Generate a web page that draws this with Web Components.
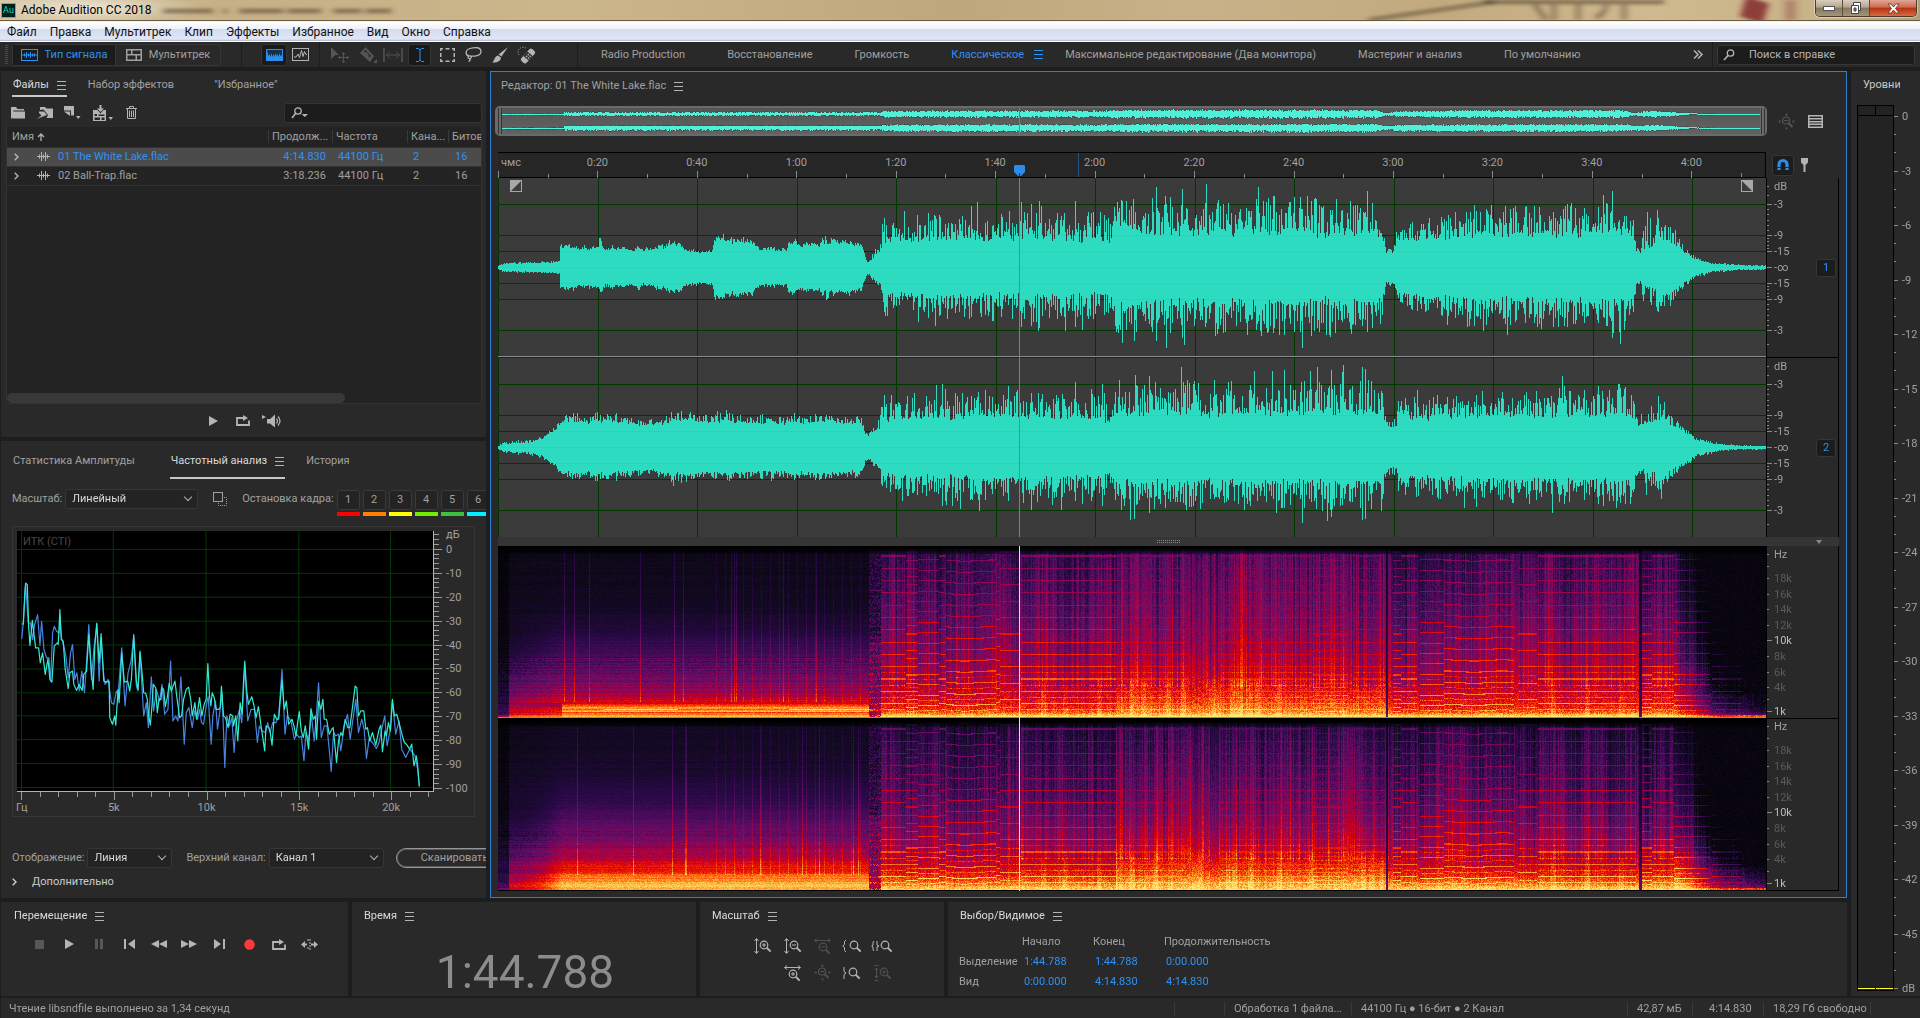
<!DOCTYPE html>
<html lang="ru">
<head>
<meta charset="utf-8">
<title>Adobe Audition CC 2018</title>
<style>
html,body{margin:0;height:100%;background:#1d1d1d;overflow:hidden}
body{font:11px/16px Roboto,"Noto Sans",sans-serif;color:#a0a0a0}
</style>
</head>
<body>
<audition-app></audition-app>
<script>
const BASE = `*{box-sizing:border-box}
:host{display:block;box-sizing:border-box}
button,input,select{font:inherit;color:inherit;margin:0;padding:0;border:0;background:none;outline:0;min-width:0}
button{display:flex;align-items:center;justify-content:center}
a{color:inherit;text-decoration:none}`;

function define(name, css, html, extra = {}) {
  const tpl = document.createElement('template');
  tpl.innerHTML = `<style>${BASE}${css}</style>${html}`;
  class El extends HTMLElement {
    constructor() {
      super();
      this.attachShadow({ mode: 'open' }).append(tpl.content.cloneNode(true));
    }
    connectedCallback() { if (extra.connected) extra.connected.call(this, this.shadowRoot); }
  }
  customElements.define(name, El);
}

/* ---------- icons: [width, height, markup] ---------- */
const mag = (x, y, r) => `<circle cx="${x}" cy="${y}" r="${r}" fill="none" stroke="currentColor" stroke-width="1.2"/><path d="M${x + r * .7} ${y + r * .7}l4 4" stroke="currentColor" stroke-width="2"/>`;
const S = 'fill="none" stroke="currentColor"';
const ICONS = {
  menu: [9, 9, `<path d="M0 .5h9M0 4.5h9M0 8.5h9" ${S}/>`],
  wave: [17, 12, `<rect x=".5" y=".5" width="16" height="11" ${S}/><path d="M1 6h15M3.500 4.500v3M5.500 3v6M7.500 4.500v3M9.500 3v6M11.500 4.500v3M13.500 4.500v3" ${S}/>`],
  multi: [16, 12, `<path d="M0 0h16v12H0zM1.500 1.500v3.500h3.500V1.500zM6.500 1.500v3.500h8V1.500zM1.500 6.500v4h8v-4zM11 6.500v4h3.500v-4z" fill="currentColor" fill-rule="evenodd"/>`],
  spectral: [17, 12, `<rect x=".5" y=".5" width="16" height="11" fill="#2c8ded" stroke="#2c8ded"/><path d="M1 1h15v5l-1.500 1-1-3-1 4-1-3-1 2-1-3-1 4-1-3-1 3-1-4-1 4-1-3-1 2z" fill="#12304f"/>`],
  pitch: [17, 13, `<rect x=".5" y=".5" width="16" height="12" ${S}/><path d="M2 9h2l2-3 1.500 3.500 2-7 1.500 6 1.500-5L14 6.500h1" ${S}/>`],
  move: [18, 16, `<path d="M0 0l8 8H4.500L0 12z" fill="currentColor"/><path d="M12.500 5.500v10M7.500 10.500h10M11 7l1.500-1.500L14 7M11 14l1.500 1.500L14 14M9 9l-1.500 1.500L9 12M16 9l1.500 1.500L16 12" ${S}/>`],
  razor: [17, 16, `<path d="M5.500 0L14 9l-4 6L0 6zM3.800 4.200l5.800 6.300 1.200-1.800-5.600-6.200z" fill="currentColor" fill-rule="evenodd"/><path d="M5.500 5l3 3.500" ${S} stroke-width="1.500"/><path d="M17 12v4h-4z" fill="currentColor"/>`],
  slip: [20, 14, `<path d="M1 0v14M19 0v14" ${S} stroke-width="1.500"/><path d="M3.500 7h13M7 3.500L3.500 7 7 10.500M13 3.500L16.500 7 13 10.500" ${S}/>`],
  ibeam: [8, 14, `<path d="M0 .5h2.500L4 2l1.500-1.500H8M4 2v10M0 13.500h2.500L4 12l1.500 1.500H8" ${S}/>`],
  marquee: [15, 14, `<path d="M.75 3V.75H3M5.500.75h4M12 .75h2.250V3M14.250 5v4M14.250 11v2.250H12M9.500 13.250h-4M3 13.250H.75V11M.75 9V5" ${S} stroke-width="1.500"/>`],
  lasso: [17, 15, `<path d="M4 9C0 8 0 3 5 1.500S16 0 16 4.500 9 9.500 5.500 9C3 8.500 2.500 11 4 11.500S7.500 10 5.500 9M5 11c.5 2 0 3-1.500 3.500" ${S} stroke-width="1.300"/>`],
  brush: [16, 16, `<path d="M16 0L9.500 9.500 6.500 7.500zM6 8.500l3 2c0 4-5 5.500-9 5 3-2 2-6 6-7z" fill="currentColor"/>`],
  heal: [18, 16, `<path d="M1 8a5 5 0 0 1 7.500-6.500" ${S} stroke-dasharray="1 1.500"/><g transform="rotate(-48 10 9)"><rect x="2" y="5.500" width="16" height="7" rx="2" fill="currentColor"/><rect x="7" y="5.500" width="6" height="7" fill="#292929"/><path d="M8 7.500h1.500v1.500H8zM10.500 7.500H12v1.500h-1.500zM8 10h1.500v1.500H8zM10.500 10H12v1.500h-1.500z" fill="currentColor"/></g>`],
  more: [10, 9, `<path d="M1 .5l4 4-4 4M5 .5l4 4-4 4" ${S} stroke-width="1.500"/>`],
  search: [12, 12, `<circle cx="7.500" cy="4" r="3.200" ${S} stroke-width="1.300"/><path d="M5 6.500L1 11" ${S} stroke-width="1.600"/>`],
  searchdd: [17, 12, `<circle cx="7" cy="4" r="3.200" ${S} stroke-width="1.300"/><path d="M4.500 6.500L1 11" ${S} stroke-width="1.600"/><path d="M10.500 7H17l-3.200 3z" fill="currentColor"/>`],
  folder: [14, 12, `<path d="M0 11.500V0h5l1.500 2H13v1.500H2.500L1 11.500zM2 4.500h12v7H1.200z" fill="currentColor"/>`],
  import: [16, 12, `<path d="M3 0h5l1.500 1.500H16V11H9.500L11 8 6.500 2.500 3 3z" fill="currentColor"/><path d="M0 12l4.500-3.500L2 6V4.500h5L10 8l-4 1.500z" fill="currentColor"/>`],
  newfile: [16, 13, `<path d="M0 0h10v9.500H7V4.500H0zM0 5.500h6v4.500zM12 10h4.500l-2.200 3z" fill="currentColor"/>`],
  insert: [20, 16, `<path d="M0 5h4.500L7.500 8.500 10.500 5H13v11H0zM1.500 9v2h2.500V9zM5.500 9.500v1.500h6V9.500zM1.500 12.500V15H7v-2.500zM8.500 12.500V15h3v-2.500z" fill="currentColor" fill-rule="evenodd"/><path d="M6.500 0h2v3.500H11L7.500 7 4 3.500h2.500zM15.500 12H20l-2.200 3z" fill="currentColor"/>`],
  trash: [11, 13, `<path d="M0 2.500h11M3.500 2V.5h4V2M1.500 3v9.500h8V3M3.500 4.500v6.500M5.500 4.500v6.500M7.500 4.500v6.500" ${S}/>`],
  clip: [13, 9, `<path d="M0 4.500h13M2.500 2.500v4M4.500 0v9M6.500 2.500v4M8.500 0v9M10.500 2.500v4" ${S}/>`],
  chev: [5, 8, `<path d="M.7.7L4 4 .7 7.300" ${S} stroke-width="1.400"/>`],
  up: [8, 8, `<path d="M4 8V1M1 4l3-3 3 3" ${S} stroke-width="1.300"/>`],
  play: [9, 10, `<path d="M0 0l9 5-9 5z" fill="currentColor"/>`],
  loop: [14, 11, `<path d="M4 3H1v7h12V5.500" ${S} stroke-width="1.800"/><path d="M4 2h3V0l5 3-5 3V4H4z" fill="currentColor"/>`],
  speaker: [20, 14, `<path d="M0 1l4 2-4 2zM5 5h3l5-4.500v13L8 9.500H5z" fill="currentColor"/><path d="M14.500 4.500q2 2.500 0 5M16 2.500q4 4.500 0 9" ${S} stroke-width="1.200"/>`],
  copy: [14, 14, `<rect x=".5" y=".5" width="9" height="9" ${S}/><path d="M11 5.500h2.500v8H5.500V11" ${S} stroke-dasharray="1 1"/>`],
  stop: [9, 9, `<path d="M0 0h9v9H0z" fill="currentColor"/>`],
  pause: [9, 10, `<path d="M0 0h3v10H0zM5 0h3v10H5z" fill="currentColor"/>`],
  prev: [11, 10, `<path d="M0 0h2v10H0zM11 0v10L4 5z" fill="currentColor"/>`],
  rew: [16, 8, `<path d="M8 0v8L0 4zM16 0v8L8 4z" fill="currentColor"/>`],
  ff: [16, 8, `<path d="M0 0v8l8-4zM8 0v8l8-4z" fill="currentColor"/>`],
  next: [11, 10, `<path d="M9 0h2v10H9zM0 0v10l7-5z" fill="currentColor"/>`],
  rec: [11, 11, `<circle cx="5.500" cy="5.500" r="5.200" fill="#fb3b3b"/>`],
  skip: [17, 11, `<path d="M0 5.500L4 2v2.500h2v2H4V9zM17 5.500L13 2v2.500h-3v2h3V9z" fill="currentColor"/><path d="M7 0v3M7 8v3M9 0v11" ${S} stroke-dasharray="2 1"/>`],
  zinv: [17, 16, `<path d="M2.500 1v14M.5 3l2-2.500 2 2.500M.5 13l2 2.500 2-2.500" ${S}/>${mag(10, 7, 3.8)}<path d="M8 7h4M10 5v4" ${S}/>`],
  zoutv: [17, 16, `<path d="M2.500 1v14M.5 3l2-2.500 2 2.500M.5 13l2 2.500 2-2.500" ${S}/>${mag(10, 7, 3.8)}<path d="M8 7h4" ${S}/>`],
  zouth: [17, 16, `<path d="M1 2.500h15M3 .5L.5 2.500 3 4.500M14 .5l2.500 2-2.500 2" ${S}/>${mag(9, 9, 3.8)}<path d="M7 9h4" ${S}/>`],
  zinh: [17, 16, `<path d="M1 2.500h15M3 .5L.5 2.500 3 4.500M14 .5l2.500 2-2.500 2" ${S}/>${mag(9, 9, 3.8)}<path d="M7 9h4M9 7v4" ${S}/>`],
  zl: [20, 12, `<path d="M4 0L2.500 1.500v3L.7 6l1.800 1.500v3L4 12" ${S}/>${mag(12, 5, 3.8)}`],
  zr: [18, 12, `<path d="M1 0v4.500L3 6 1 7.500V12" ${S}/>${mag(10, 5, 3.8)}`],
  zlr: [22, 12, `<path d="M3 1L2 2v3L.7 6 2 7v3l1 1M6 1v4l2 1-2 1v4" ${S}/>${mag(14, 5, 3.8)}`],
  zsel: [17, 16, `<path d="M.5.5h4M.5 15.500h4M2.500 3v10M1 5l1.500-2L4 5M1 11l1.500 2L4 11" ${S}/>${mag(10, 7, 3.8)}<path d="M8 7h4M10 5v4" ${S}/>`],
  zfull: [17, 17, `<path d="M8.500 0l1.500 2.500H7zM8.500 17l1.500-2.500H7zM0 8.500L2.500 7v3zM17 8.500L14.500 7v3z" fill="currentColor"/>${mag(8, 7.5, 3.5)}<path d="M6 7.500h4" ${S}/>`],
  list: [15, 13, `<path d="M0 0h15v13H0zM1.500 1.500v1.500h12v-1.500zM1.500 4.500v1.500h12V4.500zM1.500 7.500v1h12v-1zM1.500 10v1.500h12V10z" fill="currentColor" fill-rule="evenodd"/>`],
  magnet: [12, 12, `<path d="M2 11V5.500a4 4 0 0 1 8 0V11" ${S} stroke-width="3.200"/><path d="M0 8.500h4M8 8.500h4" stroke="#1c1c1c" stroke-width=".8"/>`],
  marker: [7, 14, `<path d="M0 0h7v4.500L4.500 7v7h-2V7L0 4.500z" fill="currentColor"/>`],
};
define('au-icon', ':host{display:inline-flex;flex:none}svg{display:block;overflow:visible}', '<span></span>', {
  connected(root) {
    const [w, h, m] = ICONS[this.getAttribute('name')];
    root.querySelector('span').innerHTML = `<svg width="${w}" height="${h}" viewBox="0 0 ${w} ${h}" aria-hidden="true">${m}</svg>`;
  }
});
const ic = n => `<au-icon name="${n}"></au-icon>`;

/* ---------- axis: segments "weight|label|ticks|class;..." ---------- */
define('axis-scale', `
:host{display:flex;min-width:0;min-height:0}
.s{display:flex;min-width:0;min-height:0;flex-basis:0}
.t{display:flex;flex:none}.t i{display:block;flex:1 1 0;min-height:0;min-width:0}
:host([dir=v]){flex-direction:column}
:host([dir=v]) .t{flex-direction:column;width:var(--major,5px);margin-right:var(--lgap,3px)}
:host([dir=v]) .t i{align-self:flex-start;width:var(--minor,2px);border-top:1px solid var(--tick,#8a8a8a)}
:host([dir=v]) .t i.m{width:var(--major,5px)}
:host([dir=v]) b{margin-top:-7px;height:16px;white-space:nowrap}
:host([dir=h]) .s{flex-direction:column;justify-content:space-between}
:host([dir=h]) .t{height:var(--major,7px);align-items:flex-end}
:host([dir=h]) .t i{height:var(--minor,4px);border-left:1px solid var(--tick,#8a8a8a)}
:host([dir=h]) .t i.m{height:var(--major,7px)}
:host([dir=h]) b{width:40px;margin-left:-20px;text-align:center;white-space:nowrap}
:host([dir=h]) b.first{text-align:left;margin-left:var(--first,3px)}
:host([below]) .s{flex-direction:column-reverse;justify-content:flex-end}
:host([below]) .t{align-items:flex-start}
b{font-weight:400;display:block}.dim{color:#5a5a5a}.hi{color:#bcbcbc}`, '', {
  connected(root) {
    for (const d of this.getAttribute('data').split(';')) {
      const [w, label, n, cls] = d.split('|');
      const s = document.createElement('div');
      s.className = 's'; s.style.flexGrow = w;
      let t = '';
      for (let i = 0; i < +n; i++) t += `<i class="${i === 0 && label && !/low/.test(cls || '') ? 'm' : ''}"></i>`;
      const lab = label ? `<b class="${cls || ''}">${label}</b>` : '';
      const tk = `<div class="t">${t}</div>`;
      s.innerHTML = this.getAttribute('dir') === 'v' ? tk + lab : (lab || '<b></b>') + tk;
      root.append(s);
    }
  }
});

/* ---------- tabs ---------- */
define('panel-tab', `
:host{display:flex;align-items:center;height:26px;padding:4px 1px 0;border-bottom:2px solid transparent}
:host([tall]){height:38px}
button{white-space:nowrap;height:20px}
au-icon{display:none;margin-left:8px;color:#b4b4b4}
:host([menu]) au-icon{display:inline-flex}
:host([active]){color:#dadada}
:host([line]){border-bottom-color:#c8c8c8}`, `<button><slot></slot></button>${ic('menu')}`);

/* ---------- title bar and menu ---------- */
define('title-bar', `
:host{display:flex;height:21px;align-items:center;font-size:12px;color:#000;padding-left:1px;overflow:hidden;border-bottom:1px solid #6e5a40;
background:radial-gradient(ellipse 110px 16px at 90px 8px,#f3ede0cc,#f3ede000),linear-gradient(90deg,#d5c6a4 0,#c6b087 12%,#cbb58b 30%,#bfa77d 50%,#c8b188 62%,#c2aa80 75%,#cfb98f 86%,#c8b288 95%,#b49c78 100%)}
.logo{width:15px;height:15px;background:#001e1c;border:1px solid #10d8c0;color:#10d8c0;font-size:9px;line-height:13px;text-align:center;margin-right:5px}
.blur{flex:1;align-self:stretch;min-width:0}
.blur svg{display:block;width:100%;height:100%}
.win{display:flex;align-self:flex-start;height:17px;margin-right:3px;border:1px solid #4c3a2a;border-top:0;border-radius:0 0 5px 5px;overflow:hidden;box-shadow:0 0 0 1px #ffffff66}
.win button{width:27px;background:linear-gradient(#d8cfc0,#b3a58e 45%,#85765f 50%,#a3957c);border-right:1px solid #5c4c3a}
.win .x{width:46px;border:0;background:linear-gradient(#e2a695,#cc6a50 45%,#b83115 50%,#d66a40)}`,
`<span class="logo">Au</span><span>Adobe Audition CC 2018</span>
<span class="blur"><svg viewBox="0 0 1660 20" preserveAspectRatio="none"><defs><filter id="f" x="-20%" y="-60%" width="140%" height="220%"><feGaussianBlur stdDeviation="3 1.500"/></filter></defs>
<g filter="url(#f)" fill="none"><path d="M12 11h50M72 11h4M88 11h44M136 11h34M182 11h28M214 11h26" stroke="#4a3d2a" stroke-width="5" stroke-opacity=".5"/>
<path d="M1215 20L1340 2" stroke="#5a4a34" stroke-width="5" stroke-opacity=".5"/>
<path d="M1378 0l14 20M1400 20V4M1424 20V0M1442 18q14-8 8-18M1470 0v20M1330 2h180" stroke="#4a3a28" stroke-width="5" stroke-opacity=".5"/>
<path d="M1597 20l6-20" stroke="#7e2226" stroke-width="24" stroke-opacity=".8"/><path d="M1636 20V0" stroke="#9a5a50" stroke-width="12" stroke-opacity=".5"/></g></svg></span>
<span class="win"><button aria-label="Свернуть"><svg width="12" height="5"><rect x=".5" y=".5" width="11" height="4" fill="#fff" stroke="#555"/></svg></button>
<button aria-label="Восстановить"><svg width="12" height="12"><path d="M3.500.5h7v8h-7z" fill="#fff" stroke="#444"/><path d="M1.500 3.500h7v8h-7z" fill="#fff" stroke="#444"/><path d="M4 6h2v3H4z" fill="#8a7a64" stroke="#444"/></svg></button>
<button class="x" aria-label="Закрыть"><svg width="13" height="11"><path d="M1 1h3l2.500 3L9 1h3L8.500 5.500 12 10H9L6.500 7 4 10H1l3.500-4.500z" fill="#fff" stroke="#6a2a20" stroke-width=".8"/></svg></button></span>`);

define('menu-strip', `
:host{display:block;height:21px;border-top:1px solid #f6f2ea;border-bottom:1px solid #fff;background:linear-gradient(#fff,#eef1f8 35%,#d4dbee 36%,#e0e6f6 90%,#b0b6c8)}
nav{display:flex;gap:13px;padding:1px 7px;font-size:12px;line-height:19px;color:#111}`,
`<nav>${['Файл', 'Правка', 'Мультитрек', 'Клип', 'Эффекты', 'Избранное', 'Вид', 'Окно', 'Справка'].map(t => `<a href="#">${t}</a>`).join('')}</nav>`);

/* ---------- tool bar ---------- */
define('tool-strip', `
:host{display:flex;align-items:center;height:25px;background:#292929;padding:0 5px;white-space:nowrap}
.grip{width:3px;height:20px;margin-right:4px;background:repeating-linear-gradient(#4a4a4a 0 1px,transparent 1px 2px)}
.seg{display:flex;border:1px solid #363636;border-radius:3px;height:22px}
.seg button{height:20px;gap:7px;width:104px}
.seg button:first-child{background:#1c1c1c;color:#2d92f5;width:103px;border-right:1px solid #363636}
.sep{width:1px;height:25px;background:#1e1e1e}
.tools{display:flex;align-items:center}
.tools button{height:22px}
.on{background:#1a1a1a;border:1px solid #343434;border-radius:3px}
.tools .off{color:#555}.tools{color:#b4b4b4}
nav{display:flex;gap:42px;margin-left:23px;flex:1;min-width:0;overflow:hidden}
nav a.cur{color:#2d92f5;display:flex;align-items:center;gap:10px;margin-right:-20px}
.find{display:flex;align-items:center;gap:14px;width:198px;height:20px;margin-left:4px;padding-left:5px;background:#1c1c1c;border:1px solid #363636;border-radius:3px;color:#b4b4b4}
.find input{flex:1}input::placeholder{color:#b4b4b4;opacity:1}`,
`<span class="grip"></span>
<div class="seg"><button>${ic('wave')}Тип сигнала</button><button>${ic('multi')}Мультитрек</button></div>
<span class="sep" style="margin:0 19px 0 20px"></span>
<div class="tools">
<button class="on" style="width:26px" aria-label="Спектр">${ic('spectral')}</button><button style="width:27px" aria-label="Высота">${ic('pitch')}</button>
<span class="sep" style="margin:0 5px"></span>
<button class="off" style="width:30px" aria-label="Перемещение">${ic('move')}</button><button class="off" style="width:26px" aria-label="Лезвие">${ic('razor')}</button><button class="off" style="width:24px" aria-label="Сдвиг">${ic('slip')}</button>
<button class="on" style="width:23px;color:#2d92f5;margin:0 1px 0 3px" aria-label="Время">${ic('ibeam')}</button>
<button style="width:30px" aria-label="Область">${ic('marquee')}</button><button style="width:23px" aria-label="Лассо">${ic('lasso')}</button><button style="width:29px" aria-label="Кисть">${ic('brush')}</button><button style="width:26px" aria-label="Восстанавливающая кисть">${ic('heal')}</button></div>
<span class="sep" style="margin-left:37px"></span>
<nav><a href="#">Radio Production</a><a href="#">Восстановление</a><a href="#">Громкость</a><a class="cur" href="#">Классическое ${ic('menu')}</a><a href="#">Максимальное редактирование (Два монитора)</a><a href="#">Мастеринг и анализ</a><a href="#">По умолчанию</a></nav>
<button aria-label="Ещё" style="margin-right:9px;color:#b4b4b4">${ic('more')}</button><span class="sep"></span>
<label class="find">${ic('search')}<input type="search" aria-label="Поиск" placeholder="Поиск в справке"></label>`);

/* ---------- files ---------- */
define('files-panel', `
:host{display:flex;flex-direction:column;background:#292929;min-height:0;overflow:hidden;padding:0 4px 0 5px}
.tabs{display:flex;padding-left:6px;height:28px;white-space:nowrap}
.tools{display:flex;align-items:center;height:27px;color:#b4b4b4;padding-left:5px}
.tools button{height:20px}
.find{display:flex;align-items:center;margin-left:auto;width:198px;height:20px;background:#1c1c1c;border:1px solid #343434;border-radius:3px;padding-left:6px;gap:4px}
.find input{flex:1}
.list{flex:1;display:flex;flex-direction:column;background:#232323;border:1px solid #333;border-top-color:#292929;overflow:hidden;min-height:0;border-radius:0 0 3px 3px}
table{border-collapse:collapse;table-layout:fixed;width:474px;line-height:18px}
th{font-weight:400;text-align:left;height:20px;padding:1px 0 0;white-space:nowrap;overflow:hidden;border-bottom:1px solid #333}
th+th{padding-left:4px}
th .h{display:flex;align-items:center;gap:3px;padding-left:5px}
th+th{background:linear-gradient(#3a3a3a,#3a3a3a) 0 3px/1px 13px no-repeat}
td{height:19px;padding:0;white-space:nowrap;border-bottom:1px solid #333}
td .n{display:flex;align-items:center;padding-left:7px}
td:nth-child(2){text-align:right;padding-right:6px}td:nth-child(3),td:nth-child(4){padding-left:6px}td:nth-child(5){padding-left:7px}
.sel{background:#4b4b4b;color:#2d92f5}au-icon{color:#b4b4b4}
.bar{margin-top:auto;height:10px;width:338px;border-radius:5px;background:#383838}
.foot{display:flex;align-items:center;justify-content:center;gap:18px;height:33px;padding-left:2px}`,
`<div class="tabs"><panel-tab active line menu>Файлы</panel-tab><panel-tab style="margin-left:20px">Набор эффектов</panel-tab><panel-tab style="margin-left:38px">"Избранное"</panel-tab></div>
<div class="tools"><button aria-label="Открыть">${ic('folder')}</button><button style="margin-left:12px" aria-label="Импорт">${ic('import')}</button><button style="margin-left:11px" aria-label="Новый">${ic('newfile')}</button><button style="margin-left:13px" aria-label="Вставить">${ic('insert')}</button><button style="margin-left:13px" aria-label="Удалить">${ic('trash')}</button>
<label class="find">${ic('searchdd')}<input type="search" aria-label="Поиск файлов"></label></div>
<div class="list"><table><colgroup><col style="width:261px"><col style="width:64px"><col style="width:75px"><col style="width:41px"><col></colgroup>
<thead><tr><th><span class="h">Имя${ic('up')}</span></th><th>Продолж...</th><th>Частота</th><th>Кана...</th><th>Битов</th></tr></thead>
<tbody><tr class="sel"><td><span class="n">${ic('chev')}<au-icon name="clip" style="margin:0 8px 0 18px"></au-icon>01 The White Lake.flac</span></td><td>4:14.830</td><td>44100 Гц</td><td>2</td><td>16</td></tr>
<tr><td><span class="n">${ic('chev')}<au-icon name="clip" style="margin:0 8px 0 18px"></au-icon>02 Ball-Trap.flac</span></td><td>3:18.236</td><td>44100 Гц</td><td>2</td><td>16</td></tr></tbody></table>
<div class="bar"></div></div>
<div class="foot"><button aria-label="Воспроизвести">${ic('play')}</button><button aria-label="Повтор">${ic('loop')}</button><button style="margin-left:-6px" aria-label="Автовоспроизведение">${ic('speaker')}</button></div>`);

/* ---------- frequency analysis ---------- */
const GREEN = '65,13 70,13 75,-90 77,-110 82,-105 86,20 90,78 97,2 104,60 107,85 116,85 121,130 128,100 136,165 144,118 150,180 156,188 163,80 172,70 175,75 180,-30 184,60 190,65 196,150 205,208 210,160 218,155 222,195 230,213 238,195 247,213 252,165 260,155 267,45 275,160 280,210 285,80 291,10 298,130 304,42 312,185 320,188 328,185 330,295 338,315 345,290 348,318 355,210 358,250 362,180 366,100 374,188 384,185 390,215 395,180 402,45 410,185 415,210 421,95 428,170 432,220 438,222 443,240 447,290 452,318 457,260 461,195 468,205 473,280 478,240 484,240 487,205 492,210 497,262 503,235 509,192 515,215 526,185 532,235 540,295 546,290 552,240 560,210 567,203 574,245 578,290 586,250 591,300 600,235 607,290 614,255 620,240 625,132 630,230 634,260 638,220 644,235 650,270 658,270 662,265 666,200 672,290 678,295 686,325 692,285 700,290 702,320 709,290 715,365 722,250 728,285 732,190 736,125 742,215 747,255 757,232 764,260 770,295 777,262 785,320 796,395 800,320 808,325 812,335 818,378 825,285 832,300 838,300 842,250 848,182 855,270 861,245 868,315 878,300 884,320 890,350 895,310 900,277 906,335 912,355 918,320 928,390 935,268 942,300 948,290 952,360 958,245 965,270 971,240 975,300 982,300 990,345 998,330 1002,325 1012,430 1018,365 1025,340 1030,350 1038,300 1046,325 1052,325 1058,280 1068,200 1073,205 1078,290 1085,275 1094,275 1100,330 1105,325 1112,365 1120,340 1130,378 1140,330 1145,318 1150,398 1158,335 1162,350 1168,310 1174,335 1180,240 1186,290 1193,285 1200,310 1210,350 1216,370 1222,375 1232,390 1238,375 1245,440 1252,410 1256,440 1261,503';
const BLUE = '65,58 70,10 77,-105 85,10 92,10 98,60 104,15 113,-15 120,78 125,5 132,90 140,115 147,115 152,185 158,40 163,20 170,35 178,40 180,-10 185,55 192,80 198,110 205,175 212,100 218,75 225,180 231,160 238,215 246,155 254,220 262,100 267,15 275,180 282,90 291,15 298,185 304,60 312,170 316,195 325,180 335,250 342,255 350,215 355,225 366,85 376,260 385,160 394,125 402,50 410,200 415,215 421,100 432,290 440,250 446,325 455,172 462,275 470,210 480,245 487,195 495,285 505,270 513,125 520,305 528,290 535,305 544,172 554,375 560,280 568,265 578,325 585,275 594,300 600,270 606,310 612,315 620,260 626,232 635,375 640,290 648,245 654,330 662,270 668,225 676,445 682,290 690,320 697,295 704,400 710,310 720,270 727,310 736,140 745,305 755,270 765,270 774,370 780,320 788,335 798,340 805,310 812,340 820,310 830,310 838,290 848,150 857,345 864,290 875,305 885,360 892,345 900,355 906,350 914,425 920,340 928,365 936,285 945,365 952,280 958,190 966,355 975,320 983,320 990,390 996,457 1003,340 1010,350 1018,345 1025,395 1035,320 1045,285 1053,360 1060,310 1070,240 1078,340 1088,300 1095,330 1102,418 1110,360 1120,370 1132,388 1140,370 1148,330 1157,290 1164,380 1174,330 1180,245 1190,345 1200,305 1208,390 1220,415 1232,390 1240,400 1248,410 1256,450 1261,500';
let dbAxis = '3||0;15|дБ|3|low';
for (let i = 0; i < 10; i++) dbAxis += `;24|${i ? -10 * i : 0}|5`;
dbAxis += ';4|-100|1';
define('frequency-panel', `
:host{display:flex;flex-direction:column;background:#292929;min-height:0;overflow:hidden;padding-left:11px}
.tabs{display:flex;height:38px;white-space:nowrap}
.line{display:flex;align-items:center;white-space:nowrap}
.line>*{flex:none}
select{appearance:none;height:20px;background:#232323;border:1px solid #363636;border-radius:3px;padding:0 20px 0 6px;color:#dadada}
.sel{position:relative;display:flex;margin-left:3px}
.sel::after{content:"";position:absolute;right:7px;top:5px;width:5px;height:5px;border:solid #b4b4b4;border-width:0 1px 1px 0;transform:rotate(45deg)}
.holds{display:flex;gap:3px;margin-left:3px;padding-top:7px}
.holds button{width:23px;height:20px;border:1px solid #3a3a3a;border-radius:3px;background:#232323}
.holds i{display:block;height:4px;margin-top:2px}
.chart{display:grid;grid-template:minmax(0,1fr) 24px/minmax(0,1fr) 40px;flex:1;min-height:0;border:1px solid #363636;margin:7px 11px 0 0;padding:4px 0 0 4px}
.plot{background:#000;min-height:0;min-width:0;border-right:1px solid #b4b4b4;border-bottom:1px solid #b4b4b4}
svg.p{display:block;width:100%;height:100%}
.chart text{font-size:11px;fill:#484848}
.y{--major:8px;--minor:5px;--lgap:4px;--tick:#9a9a9a}
.x{--major:8px;--minor:5px;--tick:#9a9a9a;--first:-5px}
.pill{height:20px;border:1px solid #969696;border-radius:10px;padding:0 24px;margin-left:12px;box-shadow:inset 0 0 0 1px #5a5a5a}
.more{color:#cccccc;gap:15px;margin:6px 0 8px;height:16px;justify-content:flex-start}`,
`<div class="tabs"><panel-tab tall>Статистика Амплитуды</panel-tab><panel-tab tall active line menu style="margin-left:34px">Частотный анализ</panel-tab><panel-tab tall style="margin-left:20px">История</panel-tab></div>
<div class="line" style="height:40px"><label for="sc">Масштаб:</label><span class="sel"><select id="sc" style="width:133px"><option>Линейный</option></select></span>
<button style="margin:0 15px" aria-label="Копировать">${ic('copy')}</button><span>Остановка кадра:</span>
<div class="holds">${['#f00', '#ff7f00', '#ff0', '#70f000', '#40c040', '#00f0ff'].map((c, i) => `<span><button>${i + 1}</button><i style="background:${c}"></i></span>`).join('')}</div></div>
<div class="chart"><div class="plot"><svg class="p" viewBox="0 0 417 261" preserveAspectRatio="none">
<path d="M0 18.500h417M0 42.500h417M0 66.500h417M0 90.500h417M0 114.500h417M0 138.500h417M0 162.500h417M0 185.500h417M0 209.500h417M0 233.500h417M0 257.500h417M4.500 0v261M96.500 0v261M189.500 0v261M282.500 0v261M374.500 0v261" stroke="#003a00" fill="none"/>
<text x="6" y="14">ИТК (CTI)</text>
<g transform="translate(-17 89) scale(.3333)" fill="none" stroke-width="3.600" stroke-linejoin="round"><polyline points="${BLUE}" stroke="#4a84e0"/><polyline points="${GREEN}" stroke="#32ecd0"/></g></svg></div>
<axis-scale class="y" dir="v" data="${dbAxis}"></axis-scale>
<axis-scale class="x" dir="h" below data="4||0;93|Гц|5|first;93|5k|5;93|10k|5;92|15k|5;37|20k|2;6||1"></axis-scale></div>
<div class="line" style="margin-top:31px"><label for="vw">Отображение:</label><span class="sel"><select id="vw" style="width:85px"><option>Линия</option></select></span>
<label for="ch" style="margin-left:14px">Верхний канал:</label><span class="sel"><select id="ch" style="width:115px"><option>Канал 1</option></select></span><button class="pill">Сканировать</button></div>
<button class="more">${ic('chev')}Дополнительно</button>`);

/* ---------- signal model ---------- */
function rng(seed) { return () => { seed = (seed + 0x6D2B79F5) | 0; let t = Math.imul(seed ^ seed >>> 15, 1 | seed); t = t + Math.imul(t ^ t >>> 7, 61 | t) ^ t; return ((t ^ t >>> 14) >>> 0) / 4294967296; }; }
const SPAN = 1268, HEAD = 104.788 / 254.83;
const ENV = [
  [[0,1,1],[6,3,2],[55,4,2],[61,5,2],[62,20,4],[66,18,4],[99,17,4],[102,22,8],[106,17,4],[135,16,3],[140,20,5],[145,16,3],[165,18,4],[172,22,6],[181,22,5],[188,14,3],[214,15,3],[216,25,8],[235,24,5],[252,24,6],[262,17,4],[288,15,4],[290,24,6],[305,19,4],[320,20,4],[326,23,10],[345,22,4],[363,21,4],[369,5,3],[376,10,6],[381,14,8],[384,23,38],[390,24,30],[500,26,32],[612,25,34],[617,32,40],[760,31,42],[800,29,46],[830,30,46],[884,31,36],[888,15,5],[894,14,4],[897,15,20],[902,23,24],[940,27,24],[970,29,34],[1132,30,40],[1138,16,6],[1142,12,4],[1148,17,34],[1164,24,30],[1175,20,18],[1186,13,8],[1198,7,3],[1215,3,2],[1240,1.5,1.5],[1268,1,1]],
  [[0,1,1],[6,3,3],[30,4,3],[44,8,4],[56,16,5],[63,25,8],[110,25,9],[150,21,8],[172,23,9],[176,25,12],[260,23,10],[362,24,8],[369,8,4],[376,15,6],[381,18,8],[384,25,30],[500,29,30],[612,26,32],[617,31,36],[700,31,40],[884,31,38],[888,21,5],[897,20,12],[902,27,24],[960,29,28],[1132,31,36],[1140,21,8],[1148,21,24],[1164,27,22],[1176,20,10],[1188,12,5],[1200,6,3],[1215,3,2],[1240,1,1],[1268,.8,.8]]];
function envAt(k, x) {
  const p = ENV[k]; let i = 1; while (i < p.length - 1 && p[i][0] < x) i++;
  const a = p[i - 1], b = p[i], t = Math.min(1, Math.max(0, (x - a[0]) / (b[0] - a[0])));
  return [a[1] + (b[1] - a[1]) * t, a[2] + (b[2] - a[2]) * t];
}
function peaks(k, w) {
  const r = rng(77 + k * 31), out = [];
  const side = s => { const h = r(); return s * (h > .97 ? 1.05 + r() * .22 : h > .72 ? .55 + r() * .4 : h > .42 ? .25 + r() * .35 : r() * .22); };
  let wob = 0;
  for (let i = 0; i < w; i++) {
    const [b, s] = envAt(k, i * SPAN / w);
    wob = wob * .8 + (r() - .5) * b * .08;
    const up = side(s), shared = r() > .5;
    out.push([b + wob + up, b + wob + (shared ? up * .85 : side(s) * .92)]);
  }
  return out;
}
function canvasElement(name, css, draw) {
  define(name, `:host{display:block;min-width:0;min-height:0;overflow:hidden}canvas{display:block;width:100%;height:100%}${css}`, '<canvas></canvas>', {
    connected(root) {
      const c = root.querySelector('canvas');
      const paint = () => {
        const w = Math.round(this.clientWidth), h = Math.round(this.clientHeight);
        if (!w || !h || (c.width === w && c.height === h && c.done)) return;
        c.width = w; c.height = h; c.done = true; draw(c.getContext('2d'), w, h);
      };
      new ResizeObserver(paint).observe(this); paint();
    }
  });
}
canvasElement('wave-view', ':host{background:#3a3a3a}', (g, w, h) => {
  const half = h / 2;
  g.fillStyle = '#3b3b3b'; g.fillRect(0, 0, w, h);
  g.fillStyle = '#003800';
  for (let k = 0; k < 2; k++) { const cy = Math.round(half * k + 89); for (const d of [0, 16, 32, 63]) { g.fillRect(0, cy - d, w, 1); g.fillRect(0, cy + d, w, 1); } }
  for (let s = 0; s < 254; s += 20) g.fillRect(Math.round(s / 254.83 * w), 0, 1, h);
  for (let k = 0; k < 2; k++) {
    const cy = Math.round(half * k + 89);
    g.fillStyle = '#2ddcc0';
    peaks(k, w).forEach(([u, d], x) => g.fillRect(x, Math.round(cy - u), 1, Math.round(u + d) + 1));
    g.fillStyle = 'rgba(0,60,50,.05)'; for (const d of [-32, -16, 0, 16, 32]) g.fillRect(0, cy + d, w, 1);
  }
  g.fillStyle = '#8a8a8a'; g.fillRect(0, Math.round(half) - 2, w, 1);
  g.fillStyle = '#003800'; g.fillRect(0, Math.round(half) - 1, w, 1);
  g.fillStyle = '#e0555a'; g.fillRect(Math.round(HEAD * w), 0, 1, h);
  const tri = (x, flip) => {
    g.fillStyle = '#a8a8a8'; g.fillRect(x, 2, 12, 12); g.fillStyle = '#3b3b3b'; g.beginPath();
    if (flip) { g.moveTo(x + 1, 3); g.lineTo(x + 1, 13); g.lineTo(x + 11, 13); } else { g.moveTo(x + 11, 3); g.lineTo(x + 11, 13); g.lineTo(x + 1, 13); }
    g.fill();
  };
  tri(12, false); tri(w - 25, true);
});
canvasElement('overview-view', '', (g, w, h) => {
  for (let k = 0; k < 2; k++) {
    const cy = k ? h - 6 : 6, r = rng(400 + k);
    peaks(k, w).forEach(([u, d], x) => {
      const [b, s] = envAt(k, x * SPAN / w), X = x * SPAN / w;
      const core = X < 62 ? .5 : X < 380 ? (k ? 1.6 : 1.1) + r() * .8 : (b * .8 + s * .5 * r()) / 10;
      if (b > 2.5) { g.fillStyle = '#35504c'; const e = r() > .5 ? 1 : 0; g.fillRect(x, Math.round(cy - core - e), 1, Math.round(core * 2 + e + (r() > .5 ? 1 : 0))); }
      g.fillStyle = '#50f0d8'; g.fillRect(x, Math.round(cy - core), 1, Math.max(1, Math.round(core * 2)));
    });
  }
  g.fillStyle = '#e0555a'; g.fillRect(Math.round(HEAD * w), 0, 1, h);
});
const STOPS = [[0,0,0,0],[.1,14,9,26],[.22,40,9,70],[.35,92,12,100],[.48,152,4,82],[.6,215,0,20],[.7,248,44,0],[.82,255,136,28],[.92,255,200,80],[1,255,232,120]];
const PAL = Array.from({ length: 256 }, (_, i) => {
  const v = i / 255; let j = 1; while (STOPS[j][0] < v) j++;
  const a = STOPS[j - 1], b = STOPS[j], t = (v - a[0]) / (b[0] - a[0]);
  return [1, 2, 3].map(n => a[n] + (b[n] - a[n]) * t);
});
const curve = (pts, x) => { let i = 1; while (i < pts.length - 1 && pts[i][0] < x) i++; const a = pts[i - 1], b = pts[i]; return a[1] + (b[1] - a[1]) * Math.min(1, (x - a[0]) / (b[0] - a[0])); };
const NOTES = [[383,408,12.3],[408,420,8.2],[420,441,10.4],[441,448,12.3],[448,498,11.1],[498,502,13.8],[502,523,16.4],[523,632,12.3],[632,690,12.3],[722,815,12.3],[815,850,8.2],[855,887,12.3],[895,903,8.2],[903,919,12.3],[922,946,10.4],[946,1016,11.1],[1020,1039,16.4],[1040,1138,12.3],[1144,1154,8.2],[1154,1176,12.3],[1176,1212,10.4],[1214,1244,12.3]];
canvasElement('spectrum-view', ':host{background:#000}', (g, w, h) => {
  const img = g.createImageData(w, h), half = Math.floor(h / 2);
  for (let k = 0; k < 2; k++) {
    const r = rng(5 + k * 91), H = half - 1;
    const quiet = k ? [[0,.92],[8,.86],[14,.76],[20,.65],[30,.54],[45,.44],[65,.34],[90,.23],[120,.15],[171,.11]] : [[0,.88],[4,.75],[6,.82],[9,.78],[13,.63],[18,.54],[26,.47],[40,.37],[60,.3],[85,.19],[110,.12],[171,.09]];
    const low = k ? [[0,.64],[8,.54],[20,.42],[45,.28],[80,.15],[171,.09]] : [[0,.72],[2,.6],[8,.5],[22,.38],[45,.24],[75,.12],[171,.08]];
    const loud = k ? [[0,.95],[6,.83],[14,.7],[24,.6],[42,.52],[70,.42],[100,.34],[135,.28],[165,.22]] : [[0,1],[3,.82],[8,.71],[18,.64],[36,.56],[60,.49],[90,.42],[125,.35],[165,.29]];
    const busy = k ? [[0,.95],[8,.84],[18,.71],[32,.61],[50,.53],[70,.45],[100,.37],[135,.3],[165,.24]] : [[0,1],[4,.83],[14,.72],[26,.64],[42,.56],[65,.48],[95,.42],[130,.37],[165,.32]];
    const rowTex = Array.from({ length: H + 2 }, () => r() - .5);
    const beats = Array.from({ length: 14 }, () => 617 + Math.floor(r() * 270));
    let drift = 0;
    for (let x = 0; x < w; x++) {
      const X = x * SPAN / w, rr = r(); drift = drift * .8 + (r() - .5) * .07;
      const mode = X < 371 ? 0 : X < 383 ? 1 : (X > 617 && X < 888) ? 3 : 2;
      let streak = mode === 0 ? (rr > .975 && X > 40 ? .19 : X > 215 && x % 9 === 2 ? .1 : 0) : (rr > .8 ? .07 : rr < .25 ? -.06 : 0) + drift;
      if (mode === 3) streak *= 1.2;
      const cut = Math.abs(X - 888.5) < 1.1 || Math.abs(X - 1142) < 1.1;
      const note = NOTES.find(n => X >= n[0] && X < n[1]);
      const hit = (mode === 3 ? beats : [545, 567, 601, 1055, 1089, 1123]).some(b => Math.abs(X - b) < 3) ? .07 : 0;
      for (let y = 0; y < H; y++) {
        const f = H - 1 - y; let v;
        const n = (r() - .5);
        if (mode < 2) {
          v = curve(quiet, f);
          if (X < 64) {
            const lo = curve(low, f);
            if (k) { const a = Math.max(0, X - 11) / 53; v = lo * (1 - a * a) + v * a * a; }
            else { const a = X / 64; v = f < 14 ? lo + (f < 10 ? a * .1 : 0) : lo * (1 - a) + v * a; }
            if (X < 11) v *= f < 2 ? .7 : .45;
          }
          if (!k && X >= 64 && (f === 5 || f === 9)) v += .1;
          if (!k && X >= 64 && f === 7) v += (X > 105 && X < 180) || X > 290 ? .16 : -.04;
          v += rowTex[f] * (f < 60 ? .09 : .03) + n * (f < 60 ? .11 : .05);
          if (f > 14) v += streak * Math.min(1, .55 + (171 - f) / 300);
          if (mode === 1) { v = v * .3 + .12 + (f < 75 ? .14 : .04) + n * .22; if (f % 6 < 2 && r() > .5) v += .24 * (1 - f / 190); }
        } else {
          v = curve(mode === 3 ? busy : loud, f) + streak * (f < 30 ? .35 : 1) + n * (f < 40 ? .19 : .13) + (f < 38 ? hit : hit * .2);
          if (note && f > 3) {
            const wob = note[2] === 11.1 ? Math.sin(X / 9) * .6 : 0;
            const p = (f % note[2] + wob + note[2]) % note[2];
            const a = mode === 3 ? .11 : .2;
            if (p < 1.1) v = Math.max(v, v * .35 + curve(loud, f) * .65 + a * (f < 100 ? 1 : .7));
            else if (f < 45 && p > note[2] / 2 && p < note[2] / 2 + 1) v += .1;
            else if (mode === 2) v -= .03;
          }
          if (X > 1146) v -= f > 50 ? .05 : 0;
          if (X >= 1176) {
            const d = (X - 1176) / 92;
            v -= Math.min(.3, (X - 1176) / 160) + d * .28 + (f > 22 ? d * .12 : 0);
            if (k && f < 34) v += (1 - d) * .12;
            if (f < 2) v += .35 * d;
            v = Math.max(v, .06 + n * .06);
          }
          if (cut) v = v * .42;
        }
        if (f > H - 9) v *= Math.max(0, (H - 3 - f) / 8);
        const c = PAL[Math.max(0, Math.min(255, Math.round(v * 255)))], o = ((y + k * (half + 1)) * w + x) * 4;
        img.data[o] = c[0]; img.data[o + 1] = c[1]; img.data[o + 2] = c[2]; img.data[o + 3] = 255;
      }
    }
  }
  g.putImageData(img, 0, 0);
  g.fillStyle = '#98944c'; g.fillRect(0, half - 1, w, 1);
  g.fillStyle = '#f4d8d8'; g.fillRect(Math.round(HEAD * w), 0, 1, h);
});

/* ---------- editor ---------- */
const AMP = '8||0;18|dB|2|low;31|-3|6;16|-9|5;16|-15|1;16|-∞|1;16|-15|5;31|-9|6;27|-3|2';
const HZ = '8||0;24|Hz|2|low;16|18k|1|dim low;15|16k|1|dim low;16|14k|1|dim low;15|12k|1|dim low;16|10k|1|hi;16|8k|1|dim low;15|6k|1|dim low;24|4k|2|dim low;7|1k|1|hi';
let timeAxis = '2000|чмс|2|first';
for (let s = 20; s < 240; s += 20) timeAxis += `;2000|${Math.floor(s / 60)}:${String(s % 60).padStart(2, '0')}|2`;
timeAxis += ';1000|4:00|1;483||1';
define('wave-editor', `
:host{display:flex;flex-direction:column;background:#292929;border:1px solid #2d7fd0;min-width:0;min-height:0;padding:0 7px 6px 4px}
.head{height:34px;display:flex;padding-left:5px}
.over{display:flex;align-items:center;height:30px;margin-bottom:16px}
.map{flex:1;display:flex;min-width:0;height:30px;background:linear-gradient(#555,#626262);border:2px solid #6a6a6a;border-radius:5px}
.map i{width:5px;flex:none;background:linear-gradient(90deg,#6a6a6a 1px,#333 1px 2px,#6a6a6a 2px 4px,#333 4px 5px,#6a6a6a 5px)}
.map overview-view{flex:1}
.right{width:73px;flex:none;display:flex;align-items:center;color:#b4b4b4}
.rule{display:flex;height:26px;padding-left:3px}
.rule .r{flex:1;min-width:0;background:#262626;border:1px solid #000;border-width:1px 1px 1px 0;display:flex;position:relative}
.r axis-scale{flex:1;padding-top:2px}
.pin{position:absolute;left:41.1%;top:12px;margin-left:-5px}
.cue{position:absolute;left:45.8%;top:0;bottom:0;width:1px;background:#24527e}
.body{display:flex;padding-left:3px;min-height:0}
.body>:first-child{flex:1}
.side{width:73px;flex:none;display:flex;flex-direction:column;border:1px solid #000;border-width:0 1px 0 1px}
.ch{flex:1;display:flex;min-height:0;border-bottom:1px solid #000;align-items:center}
.ch axis-scale{align-self:stretch;flex:1;--lgap:2px}
.ch button{width:20px;height:18px;background:#1c1c1c;border:1px solid #363636;border-radius:3px;color:#2d92f5;margin-right:2px}
.split{height:9px;background:#353535;margin-left:3px;display:flex;align-items:center;justify-content:center;position:relative}
.split i{width:24px;height:4px;background:linear-gradient(#0000 1px,#353535 1px 2px,#0000 2px 3px,#353535 3px),repeating-linear-gradient(90deg,#888 0 1px,transparent 1px 2px)}
.split b{position:absolute;right:17px;border:3px solid transparent;border-top:4px solid #888;border-bottom:0}`,
`<div class="head"><panel-tab menu>Редактор: 01 The White Lake.flac</panel-tab></div>
<div class="over"><div class="map"><i></i><overview-view></overview-view><i></i></div><div class="right" style="padding-left:11px;gap:13px;width:72px"><au-icon name="zfull" style="color:#555"></au-icon>${ic('list')}</div></div>
<div class="rule"><div class="r"><axis-scale dir="h" data="${timeAxis}"></axis-scale><span class="cue"></span><svg class="pin" width="11" height="12"><path d="M0 1l1-1h9l1 1v6l-4 4H4L0 7z" fill="#2d8ceb"/><path d="M5.500 8v4" stroke="#12304f"/></svg></div>
<div class="right"><button style="width:22px;height:21px;margin-left:6px;background:#1c1c1c;border:1px solid #363636;border-radius:3px;color:#2d8ceb" aria-label="Привязка">${ic('magnet')}</button><au-icon name="marker" style="margin-left:7px"></au-icon></div></div>
<div class="body" style="flex:359 1 0"><wave-view></wave-view><div class="side"><div class="ch"><axis-scale dir="v" data="${AMP}"></axis-scale><button>1</button></div><div class="ch" style="border:0"><axis-scale dir="v" data="${AMP}"></axis-scale><button>2</button></div></div></div>
<div class="split"><i></i><b></b></div>
<div class="body" style="flex:345 1 0"><spectrum-view></spectrum-view><div class="side"><div class="ch"><axis-scale dir="v" data="${HZ}"></axis-scale></div><div class="ch"><axis-scale dir="v" data="${HZ}"></axis-scale></div></div></div>`);

/* ---------- levels ---------- */
let lv = '';
for (let i = 0; i < 16; i++) lv += `54|${i ? -3 * i : 0}|3;`;
define('levels-panel', `
:host{display:flex;flex-direction:column;background:#292929;min-height:0;padding:0 0 5px 6px}
.t{height:34px;padding:6px 0 0 6px;color:#c8c8c8;width:43px;overflow:hidden}
.b{flex:1;display:flex;min-height:0}
.m{width:37px;display:flex;flex-direction:column;border:1px solid #000;background:#232323}
.clip{height:10px;border-bottom:1px solid #000;background:linear-gradient(#000,#000) 50% 0/1px 100% no-repeat}
.lvl{flex:1}.y{height:1px;background:linear-gradient(90deg,#ffff20 0 17px,#232323 17px 18px,#ffff20 18px);margin-bottom:1px}
axis-scale{margin:11px 0 3px;--major:4px;--minor:2px;--lgap:4px}`,
`<div class="t">Уровни</div><div class="b"><div class="m"><div class="clip"></div><div class="lvl"></div><div class="y"></div></div><axis-scale dir="v" data="${lv}0|dB|1"></axis-scale></div>`);

/* ---------- lower panels ---------- */
define('transport-panel', `:host{background:#292929;padding-left:12px}.i{display:flex;padding:9px 0 0 11px;color:#b4b4b4}.i button{width:30px;height:14px}.off{color:#585858}`,
`<panel-tab active menu>Перемещение</panel-tab><div class="i">${[['stop', 'off'], ['play'], ['pause', 'off'], ['prev'], ['rew'], ['ff'], ['next'], ['rec'], ['loop'], ['skip']].map(([n, c]) => `<button class="${c || ''}" aria-label="${n}">${ic(n)}</button>`).join('')}</div>`);
define('time-panel', `:host{background:#292929;padding-left:11px}output{display:block;text-align:center;font-size:46px;line-height:50px;padding:19px 9px 0 0;color:#8c8c8c}`,
`<panel-tab active menu>Время</panel-tab><output>1:44.788</output>`);
define('zoom-panel', `:host{background:#292929;padding-left:11px}.g{display:grid;grid-template-columns:repeat(5,30px);grid-auto-rows:27px;padding:4px 0 0 36px;color:#b4b4b4}.off{color:#505050}`,
`<panel-tab active menu>Масштаб</panel-tab><div class="g"><button aria-label="Увеличить амплитуду">${ic('zinv')}</button><button aria-label="Уменьшить амплитуду">${ic('zoutv')}</button><button class="off" aria-label="Уменьшить время">${ic('zouth')}</button><button aria-label="Начало">${ic('zl')}</button><button aria-label="Выделение">${ic('zlr')}</button><span></span><button aria-label="Увеличить время">${ic('zinh')}</button><button class="off" aria-label="Полностью">${ic('zfull')}</button><button aria-label="Конец">${ic('zr')}</button><button class="off" aria-label="Канал">${ic('zsel')}</button></div>`);
define('selection-panel', `:host{background:#292929;padding-left:11px}table{border-collapse:collapse;line-height:20px;margin-top:4px}th,td{padding:0;text-align:left;font-weight:400;height:20px}td{color:#2d92f5;padding-left:2px}`,
`<panel-tab active menu>Выбор/Видимое</panel-tab><table><colgroup><col style="width:63px"><col style="width:71px"><col style="width:71px"><col></colgroup><tr><th></th><th>Начало</th><th>Конец</th><th>Продолжительность</th></tr>
<tr><th>Выделение</th><td>1:44.788</td><td>1:44.788</td><td>0:00.000</td></tr><tr><th>Вид</th><td>0:00.000</td><td>4:14.830</td><td>4:14.830</td></tr></table>`);
define('status-strip', `:host{display:flex;align-items:center;height:20px;background:#292929;padding:0 49px 0 8px;white-space:nowrap}
span{border-left:1px solid #3a3a3a;height:13px;line-height:14px;padding-left:9px}.f{flex:1;border:0;padding:0}`,
`<span class="f">Чтение libsndfile выполнено за 1,34 секунд</span><span style="width:50px"></span><span style="width:127px">Обработка 1 файла...</span><span style="width:276px">44100 Гц ● 16-бит ● 2 Канал</span><span style="width:65px">42,87 мБ</span><span style="width:71px;padding-left:16px">4:14.830</span><span style="width:107px">18,29 Гб свободно</span><span style="padding:0"></span>`);

define('audition-app', `
:host{display:flex;flex-direction:column;height:100vh;background:#1d1d1d}
.main{flex:1;display:flex;gap:4px;min-height:0;margin:4px 0 2px 1px}
.col{flex:1;display:flex;flex-direction:column;gap:4px;min-width:0}
.top{flex:1;display:flex;gap:4px;min-height:0}
.left{width:485px;display:flex;flex-direction:column;gap:4px;min-height:0}
files-panel{flex:366 1 0}frequency-panel{flex:457 1 0}
wave-editor{flex:1}levels-panel{width:69px}
.bot{display:grid;grid-template-columns:minmax(0,347fr) minmax(0,344fr) minmax(0,244fr) minmax(0,899fr);gap:4px;height:94px}
.bot>*{overflow:hidden}
status-strip{margin-left:1px}`,
`<title-bar></title-bar><menu-strip></menu-strip><tool-strip></tool-strip>
<div class="main"><div class="col"><div class="top"><div class="left"><files-panel></files-panel><frequency-panel></frequency-panel></div><wave-editor></wave-editor></div>
<div class="bot"><transport-panel></transport-panel><time-panel></time-panel><zoom-panel></zoom-panel><selection-panel></selection-panel></div></div>
<levels-panel></levels-panel></div><status-strip></status-strip>`);
</script>
</body>
</html>
